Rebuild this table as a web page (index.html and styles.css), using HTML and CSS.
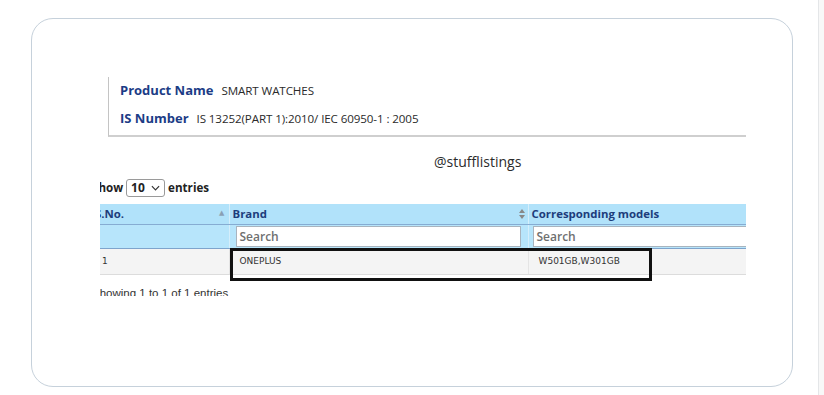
FILE: index.html
```html
<!DOCTYPE html>
<html>
<head>
<meta charset="utf-8">
<link rel="stylesheet" href="styles.css">
</head>
<body>
<div class="page">
  <main class="stage">
    <div class="card">
      <div class="shot">
        <div class="shot-inner">
          <div class="info">
            <div class="info-row"><span class="label">Product Name</span><span class="value">SMART WATCHES</span></div>
            <div class="info-row"><span class="label">IS Number</span><span class="value">IS 13252(PART 1):2010/ IEC 60950-1 : 2005</span></div>
          </div>
          <div class="handle">@stufflistings</div>
          <div class="length">Show <span class="select"><span>10</span><svg class="chev" viewBox="0 0 10 6" width="9" height="6"><path d="M1 1l4 4 4-4" fill="none" stroke="#333" stroke-width="1.3"/></svg></span> entries</div>
          <div class="tablewrap">
            <table class="grid">
              <colgroup><col class="c1"><col class="c2"><col class="c3"></colgroup>
              <thead>
                <tr class="head">
                  <th><span>S.No.</span><span class="sort-up">&#9650;</span></th>
                  <th><span>Brand</span><span class="sort-both"><svg viewBox="0 0 6 10" width="6" height="10"><path d="M3 0L6 4H0z M3 10L0 6h6z" fill="#888"/></svg></span></th>
                  <th><span>Corresponding models</span></th>
                </tr>
                <tr class="filters">
                  <th></th>
                  <th><div class="search s2">Search</div></th>
                  <th><div class="search s3">Search</div></th>
                </tr>
              </thead>
              <tbody>
                <tr class="data">
                  <td>1</td>
                  <td>ONEPLUS</td>
                  <td>W501GB,W301GB</td>
                </tr>
              </tbody>
            </table>
            <div class="highlight"></div>
          </div>
          <div class="status">Showing 1 to 1 of 1 entries</div>
        </div>
      </div>
    </div>
  </main>
  <aside class="rail"></aside>
</div>
</body>
</html>
```
FILE: styles.css
```css
* { box-sizing: border-box; }
html, body { margin: 0; padding: 0; background: #fff; }
body { font-family: "Open Sans", "DejaVu Sans", sans-serif; color: #333; }

.page { display: flex; width: 824px; height: 395px; overflow: hidden; }
.stage { width: 818px; flex: none; padding: 18px 0 0 31px; }
.rail { flex: 1; border-left: 1px solid #e4e6e8; background: #f8f8f8; }

.card {
  width: 762px;
  height: 369px;
  border: 1px solid #c6d1db;
  border-radius: 22px;
  background: #fff;
  padding: 41px 0 0 68px;
}

.shot { width: 646px; height: 236px; overflow: hidden; }
.shot-inner { margin-left: -8px; width: 760px; }

.info {
  margin: 17px 0 0 16px;
  width: 700px;
  border-left: 1px solid #c4c4c4;
  border-bottom: 2px solid #cfcfcf;
  padding: 0 0 6px 11px;
}
.info-row { height: 26px; line-height: 24px; white-space: nowrap; }
.info-row + .info-row { line-height: 28px; }
.label { font-weight: 700; font-size: 13px; color: #1c3c86; margin-right: 8px; }
.value { font-size: 11.6px; color: #2a2a2a; letter-spacing: -0.1px; }

.handle {
  margin: 15px 0 0 342px;
  height: 20px;
  line-height: 20px;
  font-size: 14px;
  color: #2b2b2b;
}

.length {
  margin-top: 6px;
  height: 20px;
  line-height: 20px;
  font-size: 11.6px;
  font-weight: 700;
  color: #222;
  display: flex;
  align-items: center;
  gap: 3px;
}
.select {
  display: inline-flex;
  align-items: center;
  justify-content: space-between;
  width: 39px;
  height: 18px;
  border: 1px solid #9a9a9a;
  border-radius: 3px;
  padding: 0 4px 0 4px;
  font-weight: 700;
  font-size: 12px;
}
.chev { display: block; }

.tablewrap { position: relative; margin-top: 6px; }
.grid { border-collapse: collapse; table-layout: fixed; width: 678px; }
.c1 { width: 137px; }
.c2 { width: 299px; }
.c3 { width: 242px; }

.head th {
  height: 20px;
  background: #b1e2fa;
  border-left: 1px solid #d5eefb;
  border-bottom: 1px solid #86acd2;
  text-align: left;
  font-size: 11.4px;
  font-weight: 700;
  color: #1d3d7c;
  padding: 0 4px 0 3px;
  position: relative;
  white-space: nowrap;
}
.head th:first-child { border-left: none; }
.sort-up {
  position: absolute;
  right: 4px;
  top: 4px;
  font-size: 7px;
  color: #8aa0b4;
}
.sort-both {
  position: absolute;
  right: 3px;
  top: 5px;
  line-height: 0;
}

.filters th {
  height: 24px;
  background: #b7e5fb;
  border-left: 1px solid #d5eefb;
  border-bottom: 1px solid #7ea4cc;
  padding: 1px 0 1px 0;
  vertical-align: top;
  text-align: left;
}
.filters th:first-child { border-left: none; }
.search {
  height: 21px;
  background: #fff;
  border: 1px solid #a9b4be;
  font-size: 12px;
  font-weight: 600;
  color: #6f6f6f;
  line-height: 19px;
  padding-left: 3px;
  text-align: left;
}
.s2 { margin: 0 7px 0 6px; }
.s3 { margin-left: 4px; border-right: none; }

.data td {
  height: 26px;
  background: #f4f4f4;
  border-left: 1px solid #e4e4e4;
  border-bottom: 1px solid #dcdcdc;
  font-family: "DejaVu Sans", sans-serif;
  font-size: 9px;
  color: #333;
  padding: 0 0 0 10px;
}
.data td:first-child { border-left: none; }

.highlight {
  position: absolute;
  left: 138px;
  top: 44px;
  width: 422px;
  height: 33px;
  border: 3px solid #111;
}

.status {
  margin-top: 11px;
  line-height: 14px;
  font-family: "Liberation Sans", Arial, sans-serif;
  font-size: 11.5px;
  color: #333;
}
```
